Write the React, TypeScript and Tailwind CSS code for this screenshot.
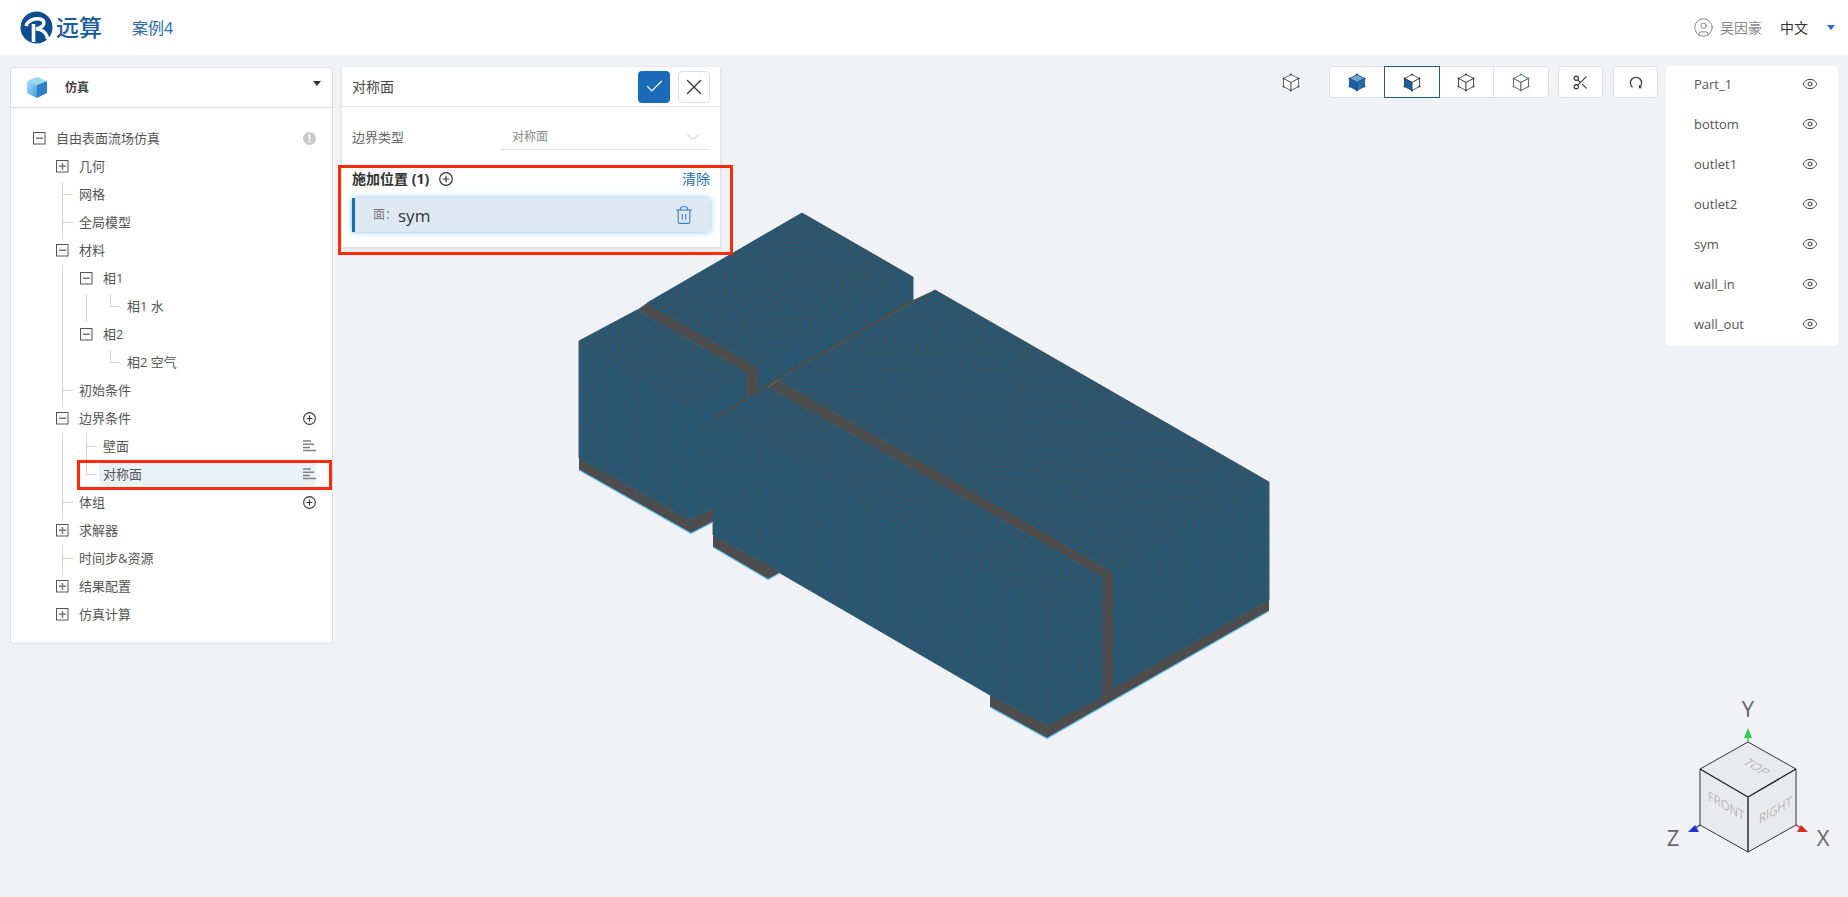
import React from "react";
import { Check, X, Trash2, Eye, Scissors, CircleUser, ChevronDown } from "lucide-react";

const Toggle = ({ open }: { open: boolean }) => (
  <svg width="13" height="13" viewBox="0 0 13 13" className="mr-[10px] shrink-0">
    <rect x="0.5" y="0.5" width="11.5" height="11.5" fill="#fff" stroke="#555" />
    <rect x="3" y="5.5" width="7" height="1.5" fill="#777" />
    {!open && <rect x="5.75" y="3" width="1.5" height="7" fill="#777" />}
  </svg>
);

const PlusCircle = ({ size = 13 }: { size?: number }) => (
  <svg width={size} height={size} viewBox="0 0 14 14" className="shrink-0">
    <circle cx="7" cy="7" r="6.3" fill="none" stroke="#333" strokeWidth="1.2" />
    <path d="M7 3.8v6.4M3.8 7h6.4" stroke="#333" strokeWidth="1.2" />
  </svg>
);

const Bars = () => (
  <svg width="13" height="12" viewBox="0 0 13 12" className="shrink-0">
    <path d="M0 1h8M0 4.2h11M0 7.4h7M0 10.6h13" stroke="#808080" strokeWidth="1.5" />
  </svg>
);

const Alert = () => (
  <svg width="13" height="13" viewBox="0 0 13 13" className="shrink-0">
    <circle cx="6.5" cy="6.5" r="6.5" fill="#c8c8c8" />
    <rect x="5.6" y="2.6" width="1.8" height="5" rx="0.8" fill="#fff" />
    <circle cx="6.5" cy="9.6" r="1" fill="#fff" />
  </svg>
);

type RowProps = {
  label: string;
  pad: string;
  toggle?: "open" | "closed";
  action?: React.ReactNode;
  vLine?: boolean;
  vLine2?: boolean;
  elbow?: "l1" | "l2" | "l3";
  half2?: boolean;
  selected?: boolean;
};

const Row = ({ label, pad, toggle, action, vLine, vLine2, elbow, half2, selected }: RowProps) => (
  <div className={`relative flex h-[28px] items-center pr-[16px] ${pad}`}>
    {vLine && <span className="absolute left-[51px] top-[2px] h-[28px] w-px bg-[#d6d6d6]" />}
    {vLine2 && <span className={`absolute left-[75px] top-[2px] w-px bg-[#d6d6d6] ${half2 ? "h-[12px]" : "h-[28px]"}`} />}
    {elbow === "l1" && <span className="absolute left-[51px] top-[14px] h-px w-[11px] bg-[#d6d6d6]" />}
    {elbow === "l2" && <span className="absolute left-[75px] top-[14px] h-px w-[11px] bg-[#d6d6d6]" />}
    {elbow === "l3" && (
      <>
        <span className="absolute left-[99px] top-[2px] h-[12px] w-px bg-[#d6d6d6]" />
        <span className="absolute left-[99px] top-[14px] h-px w-[10px] bg-[#d6d6d6]" />
      </>
    )}
    {selected && <span className="absolute left-[88px] right-[16px] top-[2px] h-[24px] rounded-[4px] bg-[#e9f2f9]" />}
    {toggle && <Toggle open={toggle === "open"} />}
    <span className="relative whitespace-nowrap text-[13px] leading-none text-[#555]">{label}</span>
    <span className="relative ml-auto flex items-center">{action}</span>
  </div>
);

const cube = (top: string, left: string, right: string, stroke = "#333", dot = "#333") => (
  <svg width="18" height="19" viewBox="0 0 18 19">
    <path d="M9 1.5 16.5 5.5 9 9.5 1.5 5.5Z" fill={top} stroke={stroke} strokeWidth="0.8" />
    <path d="M1.5 5.5 9 9.5V17.5L1.5 13.5Z" fill={left} stroke={stroke} strokeWidth="0.8" />
    <path d="M16.5 5.5 9 9.5V17.5L16.5 13.5Z" fill={right} stroke={stroke} strokeWidth="0.8" />
    <circle cx="9" cy="1.5" r="1" fill={dot} />
    <circle cx="1.5" cy="5.5" r="1" fill={dot} />
    <circle cx="16.5" cy="5.5" r="1" fill={dot} />
    <circle cx="1.5" cy="13.5" r="1" fill={dot} />
    <circle cx="16.5" cy="13.5" r="1" fill={dot} />
    <circle cx="9" cy="17.5" r="1" fill={dot} />
  </svg>
);

const parts = ["Part_1", "bottom", "outlet1", "outlet2", "sym", "wall_in", "wall_out"];

const slopeLines = (m: number, step: number, x0: number, x1: number, y0: number, y1: number) => {
  let d = "";
  const cMin = Math.min(y0 - m * x0, y0 - m * x1);
  const cMax = Math.max(y1 - m * x0, y1 - m * x1);
  for (let c = Math.floor(cMin / step) * step; c <= cMax; c += step) {
    d += `M${x0} ${(m * x0 + c).toFixed(1)}L${x1} ${(m * x1 + c).toFixed(1)}`;
  }
  return d;
};

const vertLines = (step: number, x0: number, x1: number, y0: number, y1: number) => {
  let d = "";
  for (let x = Math.floor(x0 / step) * step; x <= x1; x += step) {
    d += `M${x.toFixed(1)} ${y0}V${y1}`;
  }
  return d;
};

const Face = ({ id, pts, kind }: { id: string; pts: number[][]; kind: "top" | "left" | "right" }) => {
  const xs = pts.map((p) => p[0]);
  const ys = pts.map((p) => p[1]);
  const [x0, x1, y0, y1] = [Math.min(...xs), Math.max(...xs), Math.min(...ys), Math.max(...ys)];
  const m = 0.577;
  const d =
    kind === "top"
      ? slopeLines(m, 5.4, x0, x1, y0, y1) + slopeLines(-m, 5.4, x0, x1, y0, y1)
      : slopeLines(kind === "left" ? m : -m, 5, x0, x1, y0, y1) + vertLines(4.6, x0, x1, y0, y1);
  const points = pts.map((p) => p.join(",")).join(" ");
  return (
    <g>
      <clipPath id={id}>
        <polygon points={points} />
      </clipPath>
      <polygon points={points} fill="#1a5b80" stroke="#2b5872" strokeWidth="0.9" strokeLinejoin="bevel" />
      <path d={d} clipPath={`url(#${id})`} stroke="#4d4d4d" strokeWidth={kind === "top" ? 1.05 : 0.9} fill="none" />
    </g>
  );
};

const Mesh = () => (
  <svg className="absolute left-0 top-0" width="1848" height="842" viewBox="0 55 1848 842">
    {/* dark bands */}
    <polygon points="647,303 758,368 758,392 746,400 746,373 637,310" fill="#4d4d4d" />
    <polygon points="778,380 1113,572 1113,690 1102,697 1102,577 768,387" fill="#4d4d4d" />
    <polygon points="579,458 690,520 713,508 713,522 691,533 579,470" fill="#4d4d4d" />
    <polygon points="713,535 775,569 780,573 768,579 713,547" fill="#4d4d4d" />
    <polygon points="990,695 1047,725 1269,600 1269,611 1047,738 990,707" fill="#4d4d4d" />
    <polygon points="913,300 935,290 778,380 768,387 746,400 713,419 713,416 746,396 758,389" fill="#4d4d4d" />
    {/* upper block */}
    <Face id="f1" kind="top" pts={[[802, 213], [913, 277], [758, 368], [647, 303]]} />
    <Face id="f2" kind="right" pts={[[913, 277], [913, 300], [758, 390], [758, 368]]} />
    {/* left block */}
    <Face id="f3" kind="top" pts={[[637, 310], [746, 373], [690, 407], [579, 341]]} />
    <Face id="f4" kind="left" pts={[[579, 341], [690, 407], [690, 520], [579, 458]]} />
    <Face id="f5" kind="right" pts={[[690, 407], [746, 373], [746, 399], [713, 418], [713, 508], [690, 520]]} />
    {/* back right block */}
    <Face id="f6" kind="top" pts={[[935, 290], [1269, 482], [1113, 572], [778, 380]]} />
    <Face id="f7" kind="right" pts={[[1269, 482], [1269, 600], [1113, 688], [1113, 572]]} />
    {/* front block */}
    <Face id="f8" kind="left" pts={[[713, 417], [1047, 610], [1047, 725], [990, 695], [780, 573], [775, 569], [713, 535]]} />
    <Face id="f9" kind="right" pts={[[1047, 610], [1102, 577], [1102, 697], [1047, 725]]} />
    <Face id="f10" kind="top" pts={[[768, 387], [1102, 577], [1047, 610], [713, 417]]} />
    {/* thin groove line between the upper block and the right block */}
    <path d="M913 300 758 390M746 399 713 418" stroke="#4d4d4d" strokeWidth="1.4" fill="none" />
    {/* blue bottom edges */}
    <path d="M579 470 691 533.5 713 522" stroke="#5cc0f2" strokeWidth="1.2" fill="none" />
    <path d="M713 547 768 579.5 780 573" stroke="#5cc0f2" strokeWidth="1.2" fill="none" />
    <path d="M990 707 1047 738.5 1269 611" stroke="#5cc0f2" strokeWidth="1.2" fill="none" />
  </svg>
);

const Gizmo = () => (
  <svg className="absolute bottom-[27px] right-[8px]" width="190" height="180" viewBox="1650 690 190 180">
    <polygon points="1748,742 1796,769 1748,797 1700,769" fill="#e9eaed" />
    <polygon points="1700,769 1748,797 1748,852 1700,825" fill="#e9eaed" />
    <polygon points="1796,769 1748,797 1748,852 1796,825" fill="#e9eaed" />
    <text transform="matrix(.87 .5 0 1 1708 800)" fontSize="13" fill="#b5b5b5" fontFamily="Open Sans, sans-serif">FRONT</text>
    <text transform="matrix(.87 -.5 0 1 1759 824)" fontSize="13" fill="#b5b5b5" fontFamily="Open Sans, sans-serif">RIGHT</text>
    <text transform="matrix(.85 .5 -.85 .5 1742 763)" fontSize="13" fill="#b5b5b5" fontFamily="Open Sans, sans-serif">TOP</text>
    <path d="M1748 742 1796 769V825L1748 852 1700 825V769Z" fill="none" stroke="#333" strokeWidth="1" />
    <path d="M1700 769 1748 797 1796 769M1748 797V852" fill="none" stroke="#222" strokeWidth="1.4" />
    <path d="M1748 742V734" stroke="#2ecc55" strokeWidth="1.5" />
    <polygon points="1748,728 1752,738 1744,738" fill="#2ecc55" />
    <path d="M1700 825 1694 829" stroke="#2233cc" strokeWidth="1.5" />
    <polygon points="1688,832 1695,825 1699,832" fill="#2233cc" />
    <path d="M1796 825 1802 829" stroke="#d62c2c" strokeWidth="1.5" />
    <polygon points="1808,832 1801,825 1797,832" fill="#d62c2c" />
    <text x="1748" y="717" textAnchor="middle" fontSize="22" fill="#666" fontFamily="Open Sans, sans-serif">Y</text>
    <text x="1673" y="846" textAnchor="middle" fontSize="22" fill="#666" fontFamily="Open Sans, sans-serif">Z</text>
    <text x="1823" y="846" textAnchor="middle" fontSize="22" fill="#666" fontFamily="Open Sans, sans-serif">X</text>
  </svg>
);

export default function App() {
  return (
    <div className="relative flex h-[897px] w-full flex-col overflow-hidden bg-[#f0f2f6] font-['Open_Sans','Noto_Sans_CJK_SC',sans-serif]">
      {/* header */}
      <header className="flex h-[55px] shrink-0 items-center bg-white pl-[20px] pr-[13px]">
        <svg width="33" height="33" viewBox="0 0 33 33" className="shrink-0">
          <circle cx="16.5" cy="16.5" r="16" fill="#0f4c8f" />
          <path d="M13.5 13V31" stroke="#fff" strokeWidth="3.6" fill="none" />
          <path d="M6 15C8 9 15 7 20 8C25 9 25 14 21 16C19.5 17 18 17.5 16 18C22 18 27 22 27.5 28" stroke="#fff" strokeWidth="3.4" fill="none" />
        </svg>
        <span className="ml-[3px] text-[23px] font-medium leading-none text-[#1a5c9a]">远算</span>
        <span className="ml-[30px] text-[16px] leading-none text-[#2b6ca8]">案例4</span>
        <CircleUser size={21} strokeWidth={0.9} className="ml-auto text-[#666]" />
        <span className="ml-[6px] text-[14px] leading-none text-[#888]">吴因豪</span>
        <span className="ml-[18px] text-[14px] leading-none text-[#333]">中文</span>
        <span className="ml-[19px] h-0 w-0 border-x-[4px] border-t-[5px] border-x-transparent border-t-[#2a6bc5]" />
      </header>

      {/* main */}
      <main className="relative flex flex-1 items-start pl-[10px] pr-[10px] pt-[11px]">
        <Mesh />
        <Gizmo />

        {/* tree panel */}
        <section className="relative mt-px flex h-[577px] w-[323px] shrink-0 flex-col rounded-[4px] border border-[#dcdfe6] bg-white">
          <div className="flex h-[40px] shrink-0 items-center border-b border-[#dcdfe6] pl-[15px] pr-[11px] shadow-[0_1px_2px_rgba(0,0,0,0.05)]">
            <svg width="22" height="23" viewBox="0 0 22 23">
              <defs>
                <linearGradient id="cb" x1="0" y1="0" x2="1" y2="1">
                  <stop offset="0" stopColor="#a9dcf7" />
                  <stop offset="1" stopColor="#3f9bdc" />
                </linearGradient>
              </defs>
              <polygon points="11,1 21,5 11,9 1,5" fill="#9bd6f5" />
              <polygon points="1,5 11,9 11,22 1,17" fill="url(#cb)" />
              <polygon points="21,5 11,9 11,22 21,17" fill="#2f7fc4" />
            </svg>
            <span className="ml-[17px] text-[12px] font-bold leading-none text-[#444]">仿真</span>
            <span className="mb-[8px] ml-auto h-0 w-0 border-x-[4px] border-t-[5px] border-x-transparent border-t-[#333]" />
          </div>
          <div className="pt-[16px]">
            <Row label="自由表面流场仿真" pad="pl-[22px]" toggle="open" action={<Alert />} />
            <Row label="几何" pad="pl-[45px]" toggle="closed" />
            <Row label="网格" pad="pl-[68px]" vLine elbow="l1" />
            <Row label="全局模型" pad="pl-[68px]" vLine elbow="l1" />
            <Row label="材料" pad="pl-[45px]" toggle="open" />
            <Row label="相1" pad="pl-[69px]" toggle="open" vLine />
            <Row label="相1 水" pad="pl-[116px]" vLine vLine2 elbow="l3" />
            <Row label="相2" pad="pl-[69px]" toggle="open" vLine />
            <Row label="相2 空气" pad="pl-[116px]" vLine elbow="l3" />
            <Row label="初始条件" pad="pl-[68px]" vLine elbow="l1" />
            <Row label="边界条件" pad="pl-[45px]" toggle="open" action={<PlusCircle />} />
            <Row label="壁面" pad="pl-[92px]" vLine vLine2 elbow="l2" action={<Bars />} />
            <Row label="对称面" pad="pl-[92px]" vLine vLine2 half2 elbow="l2" selected action={<Bars />} />
            <Row label="体组" pad="pl-[68px]" vLine elbow="l1" action={<PlusCircle />} />
            <Row label="求解器" pad="pl-[45px]" toggle="closed" />
            <Row label="时间步&资源" pad="pl-[68px]" vLine elbow="l1" />
            <Row label="结果配置" pad="pl-[45px]" toggle="closed" />
            <Row label="仿真计算" pad="pl-[45px]" toggle="closed" />
          </div>
        </section>

        {/* boundary dialog */}
        <section className="relative ml-[9px] mt-px flex h-[180px] w-[378px] shrink-0 flex-col bg-white px-[10px] shadow-[0_1px_3px_rgba(0,0,0,0.15)]">
          <div className="-mx-[10px] flex h-[40px] shrink-0 items-center border-b border-[#e4e6ea] px-[10px]">
            <span className="text-[14px] leading-none text-[#444]">对称面</span>
            <button className="ml-auto flex h-[32px] w-[32px] items-center justify-center rounded-[4px] bg-[#1b6bb8]">
              <Check size={21} strokeWidth={1.3} className="text-white" />
            </button>
            <button className="ml-[8px] flex h-[32px] w-[32px] items-center justify-center rounded-[4px] border border-[#dcdfe6] bg-white">
              <X size={26} strokeWidth={1.2} className="text-[#333]" />
            </button>
          </div>
          <div className="mt-[17px] flex h-[26px] shrink-0 items-center">
            <span className="w-[149px] text-[13px] leading-none text-[#666]">边界类型</span>
            <div className="flex h-[26px] flex-1 items-center border-b border-[#dfe1e6] pl-[11px] pr-[6px]">
              <span className="text-[12px] leading-none text-[#888]">对称面</span>
              <ChevronDown size={22} strokeWidth={0.8} className="ml-auto text-[#aaa]" />
            </div>
          </div>
          <div className="mt-[20px] flex h-[18px] items-center">
            <span className="text-[14px] font-bold leading-none text-[#333]">施加位置 (1)</span>
            <span className="ml-[10px]"><PlusCircle size={14} /></span>
            <span className="ml-auto text-[14px] leading-none text-[#1b6bb8]">清除</span>
          </div>
          <div className="mt-[10px] flex h-[34px] items-center border-l-[3px] border-[#1b6bb8] bg-[#dee8f3] pl-[18px] pr-[16px] shadow-[0_0_6px_#7cc0ee]">
            <span className="text-[12px] leading-none text-[#777]">面：</span>
            <span className="ml-px text-[17px] font-medium leading-none text-[#333]">sym</span>
            <Trash2 size={20} strokeWidth={1.3} className="ml-auto text-[#3f7fc2]" />
          </div>
        </section>

        {/* toolbar */}
        <div className="relative flex flex-1 items-start justify-end gap-[10px]">
          <div className="mr-[19px] flex h-[32px] items-center text-[#555]">
            {cube("#fff", "#fff", "#fff", "#444", "#444")}
          </div>
          <div className="mr-[-1px] flex h-[32px] w-[220px] rounded-[4px] border border-[#dcdfe6] bg-white">
            <div className="flex flex-1 items-center justify-center">{cube("#6fa3d0", "#1b5fa8", "#2a6cb0", "#1b4f88", "#1b4f88")}</div>
            <div className="-my-px flex flex-1 items-center justify-center border border-[#1b5f96]">{cube("#fff", "#1b5fa8", "#fff")}</div>
            <div className="flex flex-1 items-center justify-center border-r border-[#dcdfe6]">{cube("#fff", "#fff", "#fff")}</div>
            <div className="flex flex-1 items-center justify-center">{cube("#fff", "#fff", "#fff", "#444", "#3f7fc2")}</div>
          </div>
          <button className="flex h-[32px] w-[45px] items-center justify-center rounded-[4px] border border-[#dcdfe6] bg-white">
            <Scissors size={17} strokeWidth={1.5} className="text-[#333]" />
          </button>
          <button className="flex h-[32px] w-[45px] items-center justify-center rounded-[4px] border border-[#dcdfe6] bg-white">
            <svg width="14" height="14" viewBox="0 0 14 14" fill="none">
              <path d="M3.5 12.2A5.6 5.6 0 1 1 10.5 12.2" stroke="#333" strokeWidth="1.2" />
              <path d="M10.5 10.2v2.5h2.2" stroke="#333" strokeWidth="1.1" />
            </svg>
          </button>
        </div>

        {/* part list */}
        <aside className="relative ml-[8px] w-[172px] shrink-0 rounded-[4px] bg-white">
          {parts.map((p) => (
            <div key={p} className="flex h-[40px] items-center pb-[4px] pl-[28px] pr-[20px]">
              <span className="text-[13px] leading-none text-[#555]">{p}</span>
              <Eye size={16} strokeWidth={1.5} className="ml-auto text-[#444]" />
            </div>
          ))}
        </aside>
      </main>

      {/* annotation boxes */}
      <div className="pointer-events-none absolute left-[77px] top-[460px] h-[30px] w-[255px] border-[3px] border-[#ff2a0a]" />
      <div className="pointer-events-none absolute left-[338px] top-[165px] h-[90px] w-[395px] border-[3px] border-[#ff2a0a]" />
    </div>
  );
}
